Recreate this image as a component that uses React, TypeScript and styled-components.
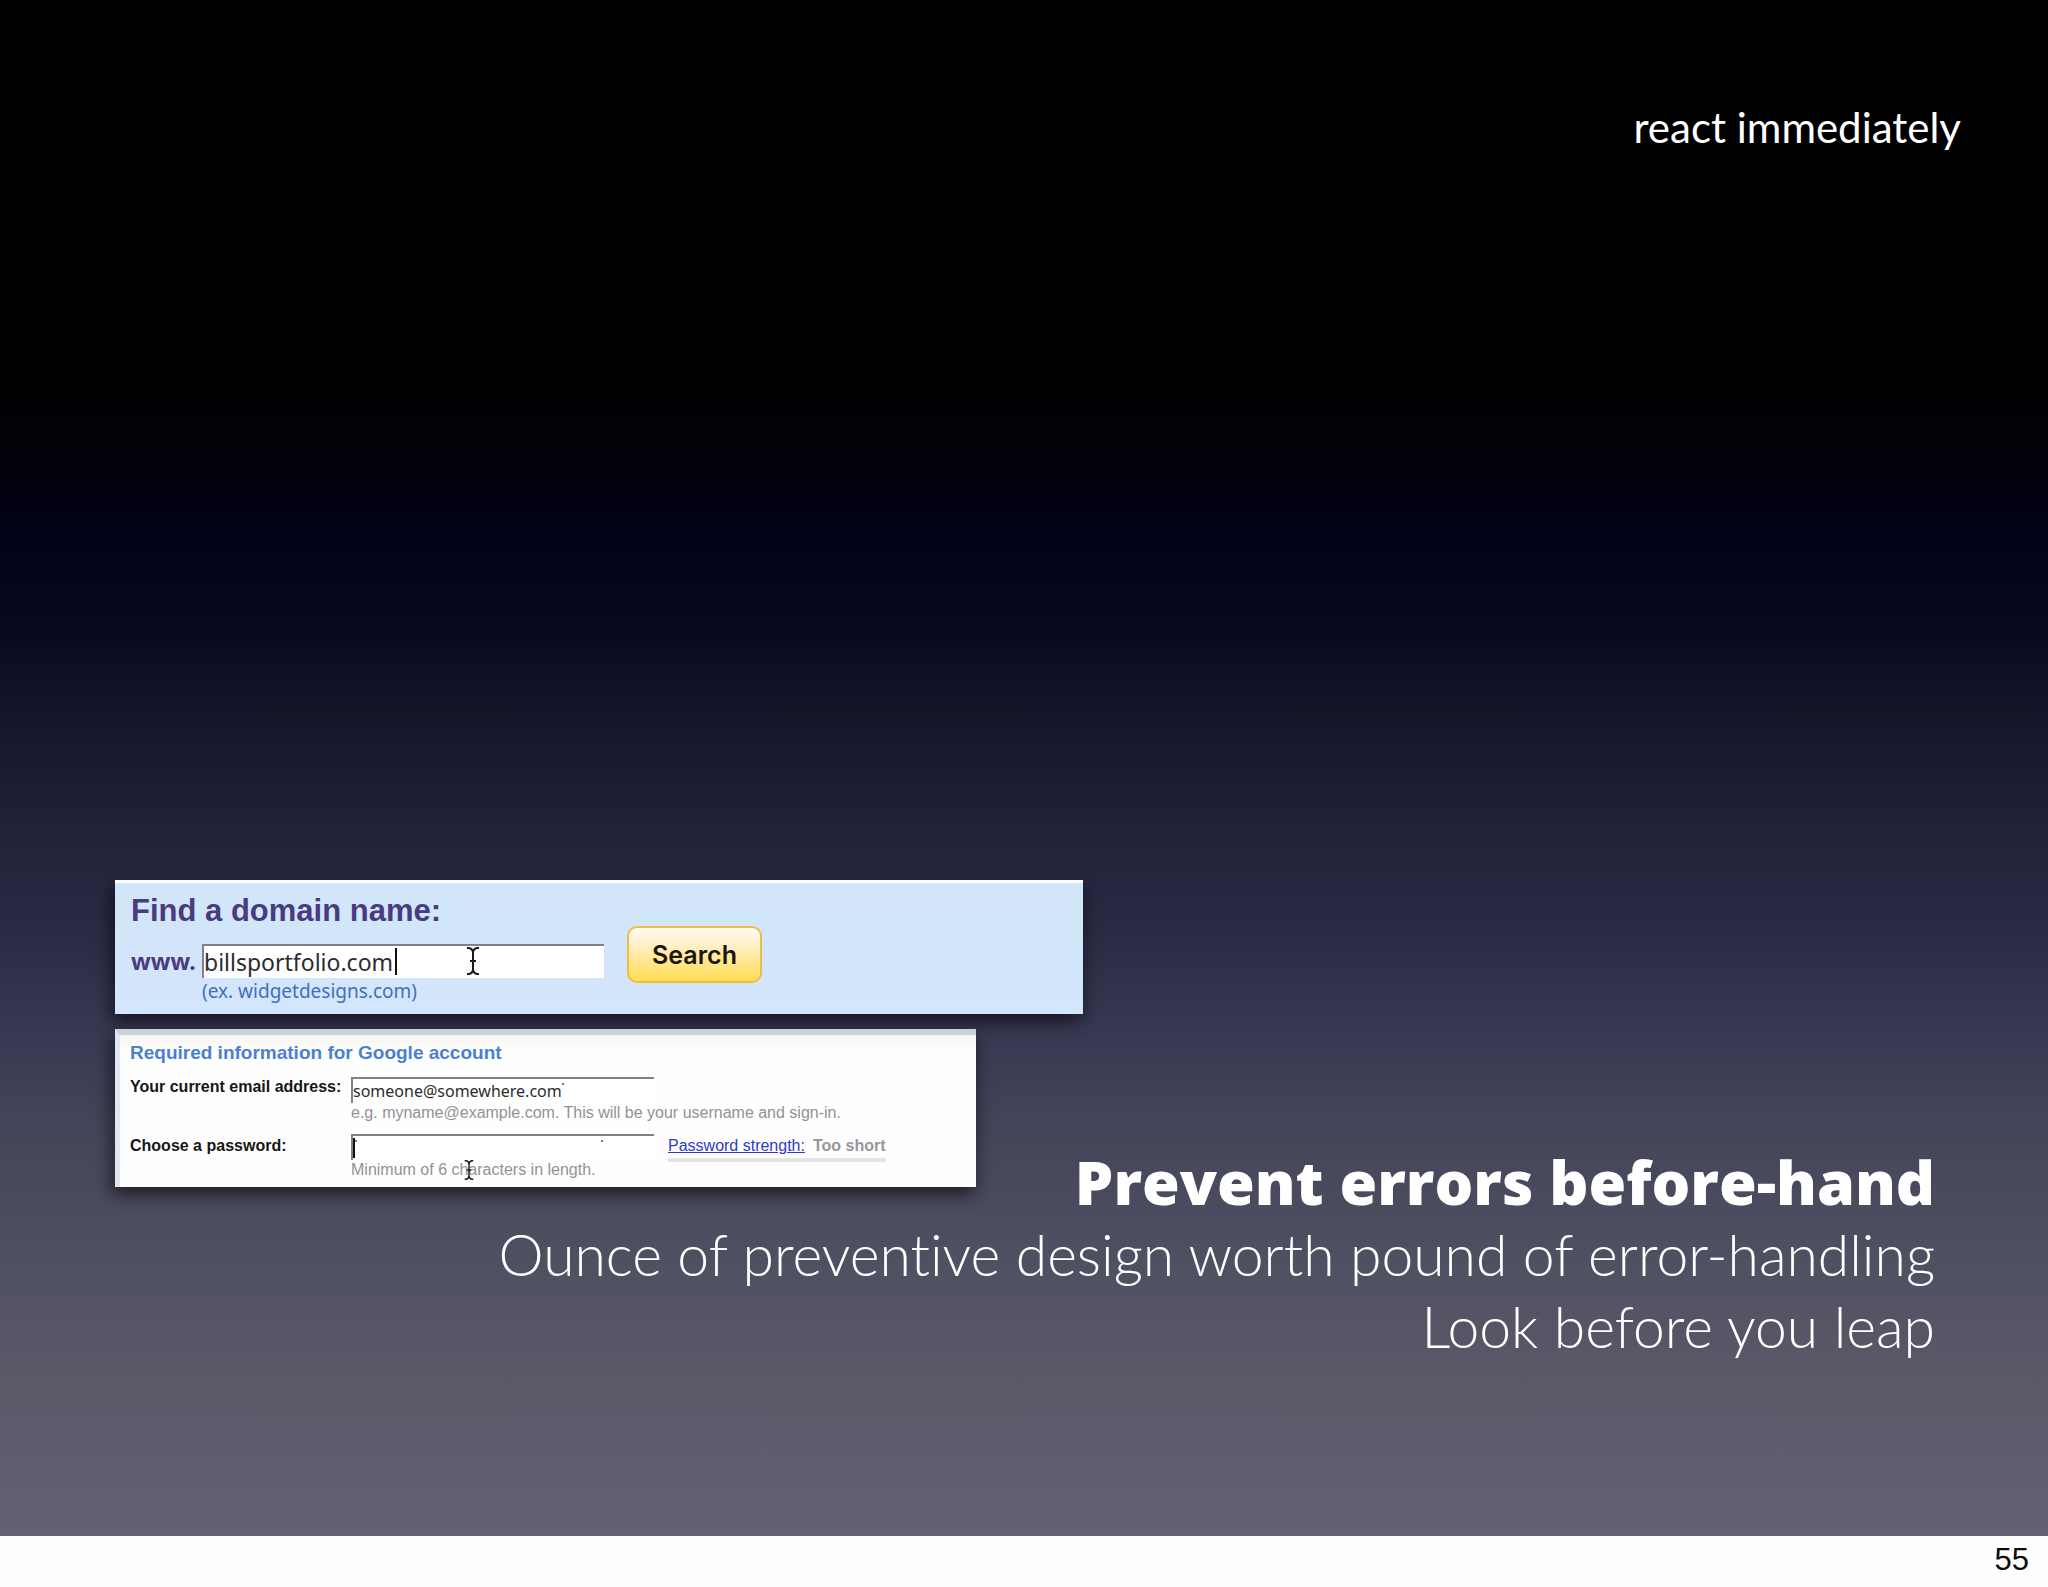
import React from "react";
import styled, { createGlobalStyle } from "styled-components";

const humanist = `Lato, "Open Sans", sans-serif`;
const heavy = `"Open Sans", "Noto Sans", sans-serif`;
const grotesque = `"Liberation Sans", Arial, sans-serif`;
const interfaceFont = `"Noto Sans", "Open Sans", sans-serif`;

const GlobalStyle = createGlobalStyle`
  *, *::before, *::after { box-sizing: border-box; }
  body { margin: 0; background: #fefefe; font-family: ${grotesque}; }
  h1, h2, p { margin: 0; }
`;

const Page = styled.div`
  display: flex;
  flex-direction: column;
  min-height: 100vh;
`;

const Slide = styled.main`
  flex: 1;
  display: flex;
  flex-direction: column;
  padding: 100px 87px 174px 115px;
  background: linear-gradient(
    to bottom,
    #000000 0%,
    #000000 23%,
    #010108 29%,
    #020218 35%,
    #080820 41%,
    #141429 46%,
    #21213a 54%,
    #2c2b45 61%,
    #3a3a54 68%,
    #47475b 75%,
    #515164 83%,
    #595968 90%,
    #626274 100%
  );
`;

const Topic = styled.header`
  text-align: right;
  color: #ffffff;
  font: 400 42px/54px ${humanist};
`;

const Examples = styled.section`
  display: flex;
  flex-direction: column;
  align-items: flex-start;
  gap: 15px;
  margin-top: auto;
`;

const Card = styled.form`
  max-width: 100%;
  box-shadow: -6px 8px 14px rgba(0, 0, 0, 0.4), 4px 8px 14px rgba(0, 0, 0, 0.25);
`;

const DomainCard = styled(Card)`
  display: flex;
  align-items: flex-start;
  gap: 23px;
  width: 968px;
  padding: 12px 16px 10px;
  border-top: 3px solid #fdfdff;
  background: linear-gradient(#d1e7f8, #d3e5fa 60%, #d3e6fb);
`;

const DomainTitle = styled.h2`
  margin-bottom: 17px;
  color: #4a3a80;
  font: 700 31px/32px ${grotesque};
`;

const DomainFields = styled.div`
  display: grid;
  grid-template-columns: 71px 402px;
`;

const Prefix = styled.label`
  color: #4a3a80;
  font: 700 23px/34px ${interfaceFont};
`;

const Field = styled.div`
  position: relative;
  display: flex;
`;

const TextBox = styled.input<{ $size: "large" | "small" }>`
  width: 100%;
  height: ${(p) => (p.$size === "large" ? 34 : 26)}px;
  padding: 0;
  border: 0 solid #808086;
  border-width: 2px 0 0 2px;
  border-radius: 0;
  outline: none;
  background: #ffffff;
  color: #2c2c2e;
  font: 400 ${(p) => (p.$size === "large" ? 23 : 16)}px ${interfaceFont};
`;

const Caret = styled.span<{ $left: number; $height: number }>`
  position: absolute;
  top: 4px;
  left: ${(p) => p.$left}px;
  width: 2px;
  height: ${(p) => p.$height}px;
  background: #111111;
`;

const Pointer = styled.svg<{ $left: number; $top: number; $height: number }>`
  position: absolute;
  left: ${(p) => p.$left}px;
  top: ${(p) => p.$top}px;
  height: ${(p) => p.$height}px;
  fill: none;
  stroke: #1c1c1c;
  stroke-width: 2;
  pointer-events: none;
`;

const Speck = styled.span<{ $left: number; $top: number }>`
  position: absolute;
  left: ${(p) => p.$left}px;
  top: ${(p) => p.$top}px;
  width: 2px;
  height: 2px;
  background: #77777c;
`;

const DomainHint = styled.p`
  grid-column: 2;
  color: #3f6fc0;
  font: 400 19px/26px ${interfaceFont};
`;

const SearchButton = styled.button`
  width: 135px;
  height: 57px;
  margin-top: 31px;
  padding: 0;
  border: 2px solid #f0bb45;
  border-radius: 10px;
  background: linear-gradient(#fffaf0, #fff3d6 25%, #ffe794 60%, #ffdf52);
  color: #1d1608;
  font: 600 25px/30px Inter, sans-serif;
`;

const AccountCard = styled(Card)`
  width: 861px;
  padding: 6px 10px 7px;
  border-top: 6px solid #c9d2d8;
  border-left: 5px solid #e1e6f3;
  background: linear-gradient(#f5f3f2, #fefefc 14px, #fefefe 30px);
`;

const AccountTitle = styled.h2`
  margin-bottom: 12px;
  color: #4a80d2;
  font: 700 19px/24px ${grotesque};
`;

const AccountFields = styled.div`
  display: grid;
  grid-template-columns: 221px 303px 218px;
`;

const AccountLabel = styled.label`
  color: #161616;
  font: 700 16px/20px ${grotesque};

  &:nth-of-type(2) {
    padding-top: 2px;
  }
`;

const AccountHint = styled.p`
  position: relative;
  grid-column: 2 / -1;
  color: #929296;
  font: 400 16px/20px ${grotesque};

  &:not(:last-child) {
    margin-bottom: 11px;
  }
`;

const Strength = styled.div`
  margin-left: 14px;
  padding-top: 2px;
  width: 218px;
  color: #97979b;
  font: 700 16px/20px ${grotesque};
  white-space: nowrap;

  &::after {
    content: "";
    display: block;
    height: 4px;
    margin: 2px 0 -2px;
    background: #e4e3e8;
  }
`;

const StrengthLink = styled.a`
  margin-right: 8px;
  color: #3138c8;
  font-weight: 400;
`;

const Takeaway = styled.section`
  margin: -41px 26px 0 0;
  color: #ffffff;
  text-align: right;
  font: 300 57px/72px ${humanist};
  font-variant-ligatures: none;
`;

const TakeawayTitle = styled.h1`
  font: 800 61px/72px ${heavy};
`;

const Footer = styled.footer`
  padding: 7px 19px 10px;
  background: #fefefe;
  color: #0c0c0c;
  text-align: right;
  font: 400 31px/34px ${grotesque};
`;

function IBeam({ left, top, height }: { left: number; top: number; height: number }) {
  return (
    <Pointer $left={left} $top={top} $height={height} viewBox="0 0 14 28" aria-hidden="true">
      <path d="M1 1h2q4 1 4 5q0-4 4-5h2M7 6v16M4 14h6M1 27h2q4-1 4-5q0 4 4 5h2" />
    </Pointer>
  );
}

function DomainSearch() {
  return (
    <DomainCard onSubmit={(e) => e.preventDefault()}>
      <div>
        <DomainTitle>Find a domain name:</DomainTitle>
        <DomainFields>
          <Prefix htmlFor="domain">www.</Prefix>
          <Field>
            <TextBox id="domain" $size="large" defaultValue="billsportfolio.com" spellCheck={false} />
            <Caret $left={193} $height={27} />
            <IBeam left={264} top={3} height={28} />
          </Field>
          <DomainHint>(ex. widgetdesigns.com)</DomainHint>
        </DomainFields>
      </div>
      <SearchButton type="submit">Search</SearchButton>
    </DomainCard>
  );
}

function AccountForm() {
  return (
    <AccountCard onSubmit={(e) => e.preventDefault()}>
      <AccountTitle>Required information for Google account</AccountTitle>
      <AccountFields>
        <AccountLabel htmlFor="email">Your current email address:</AccountLabel>
        <Field>
          <TextBox id="email" $size="small" defaultValue="someone@somewhere.com" spellCheck={false} />
          <Speck $left={211} $top={6} />
        </Field>
        <AccountHint>e.g. myname@example.com. This will be your username and sign-in.</AccountHint>
        <AccountLabel htmlFor="password">Choose a password:</AccountLabel>
        <Field>
          <TextBox id="password" type="password" $size="small" />
          <Caret $left={2} $height={20} />
          <Speck $left={4} $top={6} />
          <Speck $left={250} $top={6} />
        </Field>
        <Strength>
          <StrengthLink href="#strength">Password strength:</StrengthLink>
          Too short
        </Strength>
        <AccountHint>
          Minimum of 6 characters in length.
          <IBeam left={113} top={0} height={20} />
        </AccountHint>
      </AccountFields>
    </AccountCard>
  );
}

export default function App() {
  return (
    <Page>
      <GlobalStyle />
      <Slide>
        <Topic>react immediately</Topic>
        <Examples>
          <DomainSearch />
          <AccountForm />
        </Examples>
        <Takeaway>
          <TakeawayTitle>Prevent errors before-hand</TakeawayTitle>
          <p>Ounce of preventive design worth pound of error-handling</p>
          <p>Look before you leap</p>
        </Takeaway>
      </Slide>
      <Footer>55</Footer>
    </Page>
  );
}
